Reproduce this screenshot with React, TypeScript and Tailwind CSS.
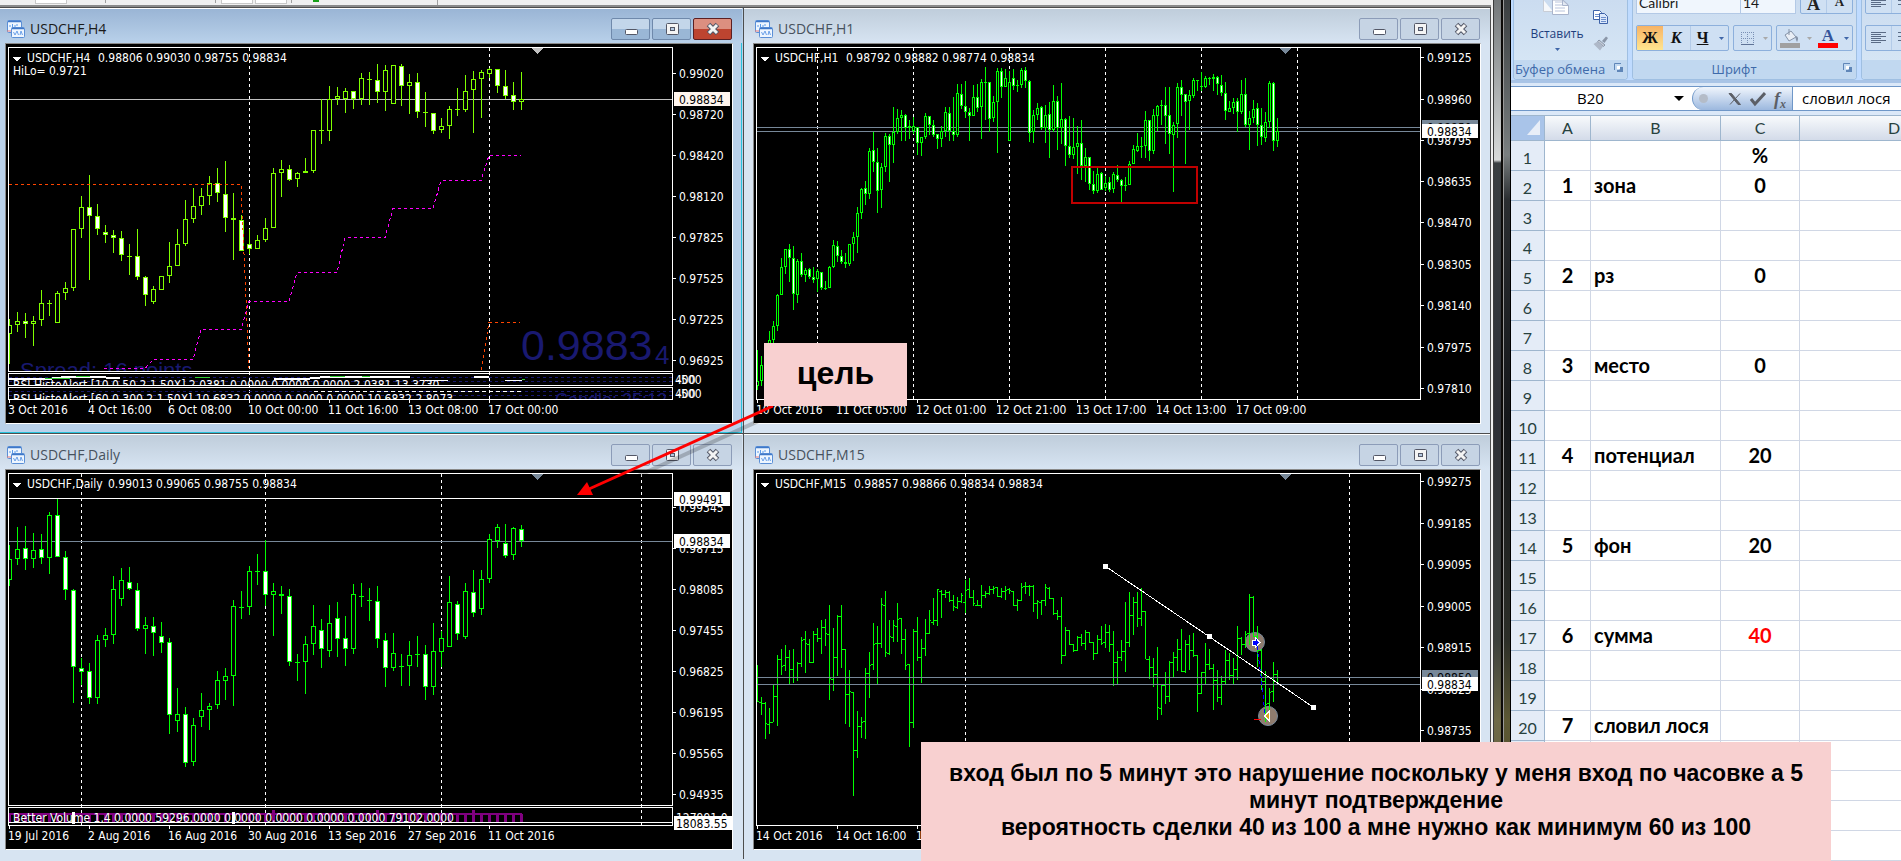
import type { ReactNode } from 'react';

const TICKS_PER_PX = 3;
const FIRST_BAR_X = 9;

const GREEN = '#00ff00';
const SLATE = '#778899';
const CHART_FONT = '"DejaVu Sans Condensed", "DejaVu Sans", sans-serif';
const ARIAL = '"Liberation Sans", Arial, sans-serif';

// high, body top, body bottom, low, filled
const H4_CANDLES = `957 975 1003 1092 0;936 963 976 996 0;941 963 973 1014 1;948 963 973 1038 0;870 909 961 978 0;900 909 914 948 0;873 879 971 971 0;846 864 881 900 0;687 687 866 873 0;588 621 689 714 0;
525 621 650 840 1;612 648 689 705 1;675 696 707 729 1;690 705 716 759 1;693 714 767 783 1;732 768 770 825 0;687 768 833 840 1;828 831 887 918 1;858 867 908 914 0;828 828 872 872 0;
726 798 830 849 0;687 732 800 800 0;600 657 734 740 0;564 618 659 669 0;564 588 620 645 0;528 549 590 615 0;504 549 581 606 1;483 582 656 696 1;579 654 662 780 1;645 660 755 755 1;
688 732 749 764 1;705 720 749 749 0;654 684 722 726 0;504 519 686 686 0;480 507 521 591 0;495 507 542 545 1;516 519 539 561 0;474 513 521 521 0;390 390 515 519 0;298 390 395 432 0;
258 297 395 423 0;261 288 299 315 0;266 273 299 339 0;273 273 299 327 1;219 234 299 315 0;216 237 242 315 0;192 240 278 309 1;195 210 278 333 0;195 195 314 314 0;192 198 260 318 1;
222 246 260 342 0;219 246 338 354 1;276 336 341 381 0;339 339 395 402 1;354 378 392 399 0;318 327 380 417 0;264 327 332 348 0;225 273 332 336 0;213 237 272 399 0;210 216 239 354 0;
204 207 224 236 0;207 207 260 279 1;210 258 290 299 1;246 285 308 330 1;216 297 308 330 0`;

const H1_CANDLES = `1052 1145 1158 1170 0;1068 1095 1145 1158 0;1040 1060 1095 1110 0;993 1020 1060 1070 0;963 978 1020 1030 0;882 885 979 993 0;774 801 887 887 0;747 747 802 822 0;732 747 776 846 1;738 774 884 930 1;
777 783 886 909 0;759 783 827 832 1;804 810 827 846 0;804 807 833 839 1;801 831 842 849 1;807 813 839 876 0;816 816 866 872 1;843 864 866 872 0;798 801 866 866 0;720 735 803 806 0;
723 738 770 786 1;750 768 788 792 1;759 786 794 806 1;732 732 794 800 0;696 711 734 783 0;621 639 713 759 0;564 567 641 657 0;543 564 584 615 1;444 453 584 597 0;396 450 488 516 1;
444 486 575 639 1;489 501 572 624 0;399 408 503 518 0;402 408 437 546 1;321 396 437 489 0;327 354 398 402 0;330 345 356 423 0;342 345 386 423 1;360 378 386 417 0;351 378 395 402 0;
381 381 431 465 1;411 411 431 468 0;339 348 413 417 0;348 348 377 405 1;360 375 407 411 1;402 402 419 447 1;378 393 419 441 0;321 336 395 411 0;321 339 395 423 1;291 393 407 423 1;
252 279 407 411 0;252 282 320 329 1;243 318 338 354 1;324 336 350 423 1;255 291 350 350 0;252 291 326 338 1;237 246 323 417 0;201 246 248 360 0;246 246 359 396 1;288 306 356 368 0;
204 213 308 459 0;204 213 263 294 1;207 234 263 263 0;213 246 425 425 0;207 234 260 270 1;240 255 260 276 1;204 210 257 266 0;201 210 245 266 1;240 243 401 426 1;330 345 398 429 0;
309 324 347 360 0;318 321 386 390 1;315 345 386 429 0;306 342 392 474 1;255 303 392 396 0;288 303 386 450 1;249 357 386 432 0;354 357 440 498 1;348 438 467 474 1;354 441 467 477 0;
378 429 443 522 0;360 429 500 540 1;444 471 500 546 0;471 471 554 570 1;513 552 575 582 1;504 522 575 579 0;516 519 572 572 1;528 549 566 575 0;531 546 572 576 1;516 522 569 579 0;
495 525 542 548 1;537 540 560 606 1;531 555 560 573 1;483 492 557 557 0;435 447 494 494 0;399 438 455 458 0;411 438 440 474 0;333 360 440 474 0;360 360 455 483 1;327 345 455 462 0;
315 318 350 393 0;300 315 320 375 1;261 315 350 432 1;261 345 404 462 1;366 375 407 576 0;249 261 374 414 0;240 261 287 348 1;282 282 308 494 1;270 285 305 390 0;234 240 290 294 0;
240 240 245 273 0;216 258 263 275 0;228 234 263 266 0;231 234 236 255 0;222 231 239 273 0;228 231 254 285 1;225 255 281 288 1;246 279 335 360 1;303 324 338 338 0;294 306 326 342 0;
294 303 338 396 1;240 282 338 342 0;234 282 377 381 1;333 354 377 450 0;300 327 356 369 0;309 324 377 438 1;324 375 413 435 1;336 366 416 426 0;243 249 368 386 0;246 249 425 453 1;
354 393 425 441 0`;

const DAILY_CANDLES = `363 405 470 486 0;309 375 407 423 0;306 372 407 438 1;327 378 407 432 0;330 375 404 420 1;264 273 404 450 0;225 273 401 401 1;381 399 500 528 1;495 498 731 837 1;702 732 746 783 1;
717 741 824 840 1;633 648 824 840 0;612 633 650 669 0;456 495 635 660 0;432 468 527 546 0;429 474 497 498 1;477 498 617 621 1;579 603 617 690 0;579 606 629 696 1;594 636 659 687 1;
642 654 875 930 1;792 870 893 924 0;849 870 1019 1029 1;882 903 1016 1026 0;807 858 881 909 0;837 846 860 918 0;741 768 845 855 0;732 756 773 828 0;528 546 758 846 0;501 549 554 585 0;
426 441 551 573 0;390 441 443 483 0;348 441 515 546 1;477 501 515 636 0;486 510 518 570 0;495 516 716 726 1;690 714 716 771 0;636 660 716 810 0;543 606 662 693 0;585 618 677 732 1;
543 597 683 699 0;534 582 647 699 1;576 642 677 726 1;480 510 677 690 0;477 516 518 549 0;492 528 533 591 0;486 531 647 672 1;627 648 734 789 1;627 687 734 741 0;690 726 728 786 0;
651 693 728 786 0;636 690 695 729 0;663 690 791 828 1;597 681 791 813 0;621 642 686 729 0;456 534 671 671 0;531 540 632 648 1;477 501 641 645 0;438 504 569 579 1;438 465 557 573 0;
330 345 467 477 0;300 309 353 372 0;300 357 398 402 1;309 312 395 408 0;303 315 353 369 1`;

// high, low, open, close
const M15_BARS = `723 836 833 833;819 873 835 838;834 945 838 898;852 930 901 895;780 896 895 817;693 906 817 705;675 753 705 727;663 741 723 699;678 783 699 736;675 777 736 760;
714 771 760 717;639 729 717 648;621 747 645 658;645 717 661 715;621 719 715 630;612 654 630 643;588 690 643 610;585 666 610 628;543 828 630 763;612 801 766 700;
573 756 700 577;543 732 577 676;675 900 676 811;738 909 811 802;804 1116 804 979;861 1002 979 907;879 942 907 894;732 945 892 747;684 822 747 724;597 738 721 660;
606 783 658 658;522 672 658 541;501 699 544 685;588 693 688 637;588 654 640 604;537 654 607 586;582 690 583 646;615 738 646 724;720 969 721 895;615 912 895 622;
579 711 622 700;645 777 700 673;585 696 673 628;558 630 628 590;522 603 595 589;495 606 589 496;498 582 502 511;498 522 511 505;501 534 505 530;513 561 530 546;
519 555 549 532;507 537 532 514;468 567 535 500;462 522 496 520;498 546 520 538;528 546 544 544;483 552 544 514;501 522 514 508;486 513 508 495;486 510 495 492;
489 520 490 518;492 522 518 502;486 528 502 500;492 510 497 500;501 546 502 544;525 561 544 530;477 531 528 490;474 510 487 487;483 516 487 486;483 564 486 538;
528 585 538 532;528 573 535 529;480 546 529 490;489 525 493 522;522 575 523 568;558 588 568 577;519 720 577 694;609 696 694 619;618 663 619 661;660 684 661 679;
636 681 679 640;630 666 640 658;618 678 658 625;624 657 625 656;654 708 656 688;633 690 688 646;606 663 646 658;600 672 655 625;603 684 625 661;621 786 661 715;
681 780 715 700;648 711 700 682;534 744 682 655;504 669 655 574;519 633 574 535;504 609 535 583;492 606 583 562;561 706 562 706;696 765 706 730;702 789 730 751;
669 888 751 851;780 873 853 784;744 840 784 817;711 834 817 715;684 762 715 700;645 741 700 676;615 744 676 742;648 747 742 661;633 738 661 679;627 700 679 694;
693 864 694 808;744 810 808 745;657 780 745 721;675 738 721 733;720 858 733 769;738 834 769 820;756 843 820 771;678 780 771 710;687 768 710 754;702 780 754 736;
606 768 736 643;639 693 643 661;621 672 661 631;510 665 628 520;516 640 520 637;606 729 637 680;675 798 680 772;741 894 772 841;792 864 838 805;714 834 802 751;738 780 751 778`;

function parseRows(source: string, shift = 0): number[][] {
  return source.split(';').map((row) =>
    row
      .trim()
      .split(' ')
      .map((value, index) =>
        index === 4
          ? Number(value)
          : Math.floor((Number(value) - shift) / TICKS_PER_PX)
      )
  );
}

const h4Candles = parseRows(H4_CANDLES);
const h1Candles = parseRows(H1_CANDLES);
const dailyCandles = parseRows(DAILY_CANDLES, 6);
const m15Bars = parseRows(M15_BARS, 6);

type CandlesProps = {
  rows: number[][];
  step: number;
  half: number;
  color: string;
};

function Candles({ rows, step, half, color }: CandlesProps) {
  return (
    <g>
      {rows.map(([high, top, bottom, low, filled], index) => {
        const x = FIRST_BAR_X + index * step;
        const bodyHeight = Math.max(bottom - top, 1);

        return (
          <g key={index}>
            <rect x={x} y={high} width={1} height={Math.max(low - high, 1)} fill={color} />
            <rect x={x - half} y={top} width={half * 2 + 1} height={bodyHeight} fill={color} />
            {bodyHeight > 2 ? (
              <rect
                x={x - half + 1}
                y={top + 1}
                width={half * 2 - 1}
                height={bodyHeight - 2}
                fill={filled ? '#fff' : '#000'}
              />
            ) : null}
          </g>
        );
      })}
    </g>
  );
}

function Bars({ rows }: { rows: number[][] }) {
  return (
    <g fill={GREEN}>
      {rows.map(([high, low, open, close], index) => {
        const x = FIRST_BAR_X + index * 4;

        return (
          <g key={index}>
            <rect x={x} y={high} width={1} height={low - high} />
            <rect x={x - 2} y={open} width={2} height={1} />
            <rect x={x + 1} y={close} width={1} height={1} />
          </g>
        );
      })}
    </g>
  );
}

function PriceTag({
  y,
  label,
  fill = '#fff',
  color = '#000',
}: {
  y: number;
  label: string;
  fill?: string;
  color?: string;
}) {
  return (
    <g>
      <rect x={674} y={y} width={56} height={14} fill={fill} />
      <text x={679} y={y + 12} fill={color}>
        {label}
      </text>
    </g>
  );
}

type ChartProps = {
  id: string;
  symbol: string;
  quote: string;
  quoteX: number;
  bottom?: number;
  prices: [number, string][];
  times: string[];
  separators: number[];
  marker?: string;
  children: ReactNode;
};

function Chart({
  id,
  symbol,
  quote,
  quoteX,
  bottom = 399,
  prices,
  times,
  separators,
  marker = SLATE,
  children,
}: ChartProps) {
  return (
    <svg
      className="block h-auto w-full bg-black"
      viewBox="6 44 726 379"
      fontFamily={CHART_FONT}
      fontSize={12}
      fill="#fff"
      shapeRendering="crispEdges"
      role="img"
      aria-label={symbol}
    >
      <defs>
        <clipPath id={`${id}-plot`}>
          <rect x={9} y={48} width={663} height={bottom - 48} />
        </clipPath>
      </defs>

      {separators.map((x) => (
        <line
          key={x}
          x1={x + 0.5}
          x2={x + 0.5}
          y1={48}
          y2={399}
          stroke="#fff"
          strokeDasharray="3 3"
        />
      ))}

      {prices.map(([y, label]) => (
        <g key={label}>
          <rect x={673} y={y} width={3} height={1} />
          <text x={679} y={y + 5}>
            {label}
          </text>
        </g>
      ))}

      {children}

      <rect x={8.5} y={47.5} width={664} height={bottom - 47} fill="none" stroke="#fff" />
      <path d="M531 48h12l-6 6z" fill={marker} />
      <path d="M12 57h9l-4.500 4.500z" />
      <text x={27} y={62}>
        {symbol}
      </text>
      <text x={quoteX} y={62}>
        {quote}
      </text>

      {times.map((label, index) => (
        <g key={label}>
          <rect x={9 + index * 80} y={400} width={1} height={3} />
          <text x={8 + index * 80} y={414}>
            {label}
          </text>
        </g>
      ))}
    </svg>
  );
}

function H4Chart() {
  return (
    <Chart
      id="h4"
      symbol="USDCHF,H4"
      quote="0.98806 0.99030 0.98755 0.98834"
      quoteX={98}
      bottom={371}
      marker="#c0c0c0"
      separators={[249, 489]}
      prices={[
        [73, '0.99020'],
        [114, '0.98720'],
        [155, '0.98420'],
        [196, '0.98120'],
        [237, '0.97825'],
        [278, '0.97525'],
        [319, '0.97225'],
        [360, '0.96925'],
      ]}
      times={[
        '3 Oct 2016',
        '4 Oct 16:00',
        '6 Oct 08:00',
        '10 Oct 00:00',
        '11 Oct 16:00',
        '13 Oct 08:00',
        '17 Oct 00:00',
      ]}
    >
      <defs>
        <clipPath id="h4-rsi-fast">
          <rect x={9} y={374} width={663} height={11} />
        </clipPath>
        <clipPath id="h4-rsi-slow">
          <rect x={9} y={388} width={663} height={11} />
        </clipPath>
      </defs>

      <text x={13} y={75}>
        HiLo= 0.9721
      </text>
      <rect x={9} y={99} width={663} height={1} fill="#c0c0c0" />
      <g clipPath="url(#h4-plot)">
        <g fill="#191970" fontFamily={ARIAL}>
          <text x={20} y={378} fontSize={22}>
            Spread: 16 points
          </text>
          <text x={521} y={360} fontSize={43}>
            0.9883
          </text>
          <text x={655} y={364} fontSize={26}>
            4
          </text>
        </g>
        <Candles rows={h4Candles} step={8} half={2} color="#7fff00" />
        <g fill="none" strokeDasharray="3 3">
          <path d="M9 184.500H241L249 368M481 370L489 322.500H520" stroke="#ff4500" />
          <path
            d="M104 368.500H145L153 359.500H193L201 329.500H241L249 301.500H289L297 272.500H337L345 237.500H385L393 208.500H433L441 180.500H481L489 155.500H521"
            stroke="#ff00ff"
          />
        </g>
      </g>

      <g clipPath="url(#h4-rsi-fast)">
        <path d="M9 377.500H672M9 381.500H672" stroke="#191970" strokeDasharray="3 3" />
        <path
          d="M9 378.500H52L70 376.500H92L120 378.500M274 378.500H310L330 376.500H394L410 376.500M474 376.500H489"
          stroke="#fff"
          fill="none"
          strokeWidth={2}
        />
        <path
          d="M45 378.500H70M76 376.500H90M195 377.500H210M330 376.500H345M362 376.500H370M522 379.500H525"
          stroke="#32cd32"
        />
        <path d="M425 380.500H448M505 380.500H522" stroke="#fff" />
        <text x={13} y={389}>
          RSI HistoAlert [10,0,50,2,1,50X] 2.0381 0.0000 0.0000 0.0000 2.0381 13.3730
        </text>
      </g>
      <g clipPath="url(#h4-rsi-slow)">
        <path d="M9 391.500H672M9 395.500H672" stroke="#191970" strokeDasharray="3 3" />
        <path d="M314 391.500H522" stroke="#fff" strokeDasharray="4 3" />
        <text x={555} y={406} fontSize={18} fill="#191970" fontFamily={ARIAL}>
          Candle: 25:12
        </text>
        <text x={13} y={403}>
          RSI HistoAlert [60,0,300,2,1,50X] 10.6832 0.0000 0.0000 0.0000 10.6832 2.8073
        </text>
      </g>
      <g fill="none" stroke="#fff">
        <rect x={8.5} y={373.5} width={664} height={12} />
        <rect x={8.5} y={387.5} width={664} height={12} />
      </g>
      <g>
        <text x={675} y={384}>400</text>
        <text x={677} y={384}>-500</text>
        <text x={675} y={398}>400</text>
        <text x={677} y={398}>-500</text>
      </g>
      <PriceTag y={92} label="0.98834" fill="#fff5ee" />
    </Chart>
  );
}

function H1Chart() {
  return (
    <Chart
      id="h1"
      symbol="USDCHF,H1"
      quote="0.98792 0.98882 0.98774 0.98834"
      quoteX={98}
      separators={[69, 165, 261, 357, 453, 549]}
      prices={[
        [57, '0.99125'],
        [99, '0.98960'],
        [140, '0.98795'],
        [181, '0.98635'],
        [222, '0.98470'],
        [264, '0.98305'],
        [305, '0.98140'],
        [347, '0.97975'],
        [388, '0.97810'],
      ]}
      times={[
        '10 Oct 2016',
        '11 Oct 05:00',
        '12 Oct 01:00',
        '12 Oct 21:00',
        '13 Oct 17:00',
        '14 Oct 13:00',
        '17 Oct 09:00',
      ]}
    >
      <rect x={9} y={127} width={663} height={1} fill={SLATE} />
      <rect x={9} y={131} width={663} height={1} fill={SLATE} />
      <g clipPath="url(#h1-plot)">
        <Candles rows={h1Candles} step={4} half={1} color={GREEN} />
      </g>
      <rect x={324} y={167} width={125} height={36} fill="none" stroke="#c00000" strokeWidth={2} />
      <PriceTag y={120} label="0.98850" fill={SLATE} />
      <PriceTag y={124} label="0.98834" />
    </Chart>
  );
}

function DailyChart() {
  return (
    <Chart
      id="daily"
      symbol="USDCHF,Daily"
      quote="0.99013 0.99065 0.98755 0.98834"
      quoteX={108}
      bottom={379}
      separators={[81, 265, 441, 641]}
      prices={[
        [81, '0.99345'],
        [122, '0.98715'],
        [163, '0.98085'],
        [204, '0.97455'],
        [245, '0.96825'],
        [286, '0.96195'],
        [327, '0.95565'],
        [368, '0.94935'],
      ]}
      times={[
        '19 Jul 2016',
        '2 Aug 2016',
        '16 Aug 2016',
        '30 Aug 2016',
        '13 Sep 2016',
        '27 Sep 2016',
        '11 Oct 2016',
      ]}
    >
      <rect x={9} y={72} width={663} height={1} />
      <rect x={9} y={115} width={663} height={1} fill={SLATE} />
      <g clipPath="url(#daily-plot)">
        <Candles rows={dailyCandles} step={8} half={2} color={GREEN} />
      </g>
      <g fill="#800080">
        <rect x={9} y={387} width={513} height={2} />
        {dailyCandles.map((_, index) => {
          const tall = index === 33 || index === 46 || index === 58;

          return (
            <rect
              key={index}
              x={8 + index * 8}
              y={tall ? 384 : 388}
              width={3}
              height={tall ? 13 : 9}
            />
          );
        })}
      </g>
      <rect x={72} y={386} width={3} height={12} />
      <rect x={232} y={386} width={3} height={12} />
      <rect x={9} y={396} width={663} height={1} />
      <text x={13} y={396}>
        Better Volume 1.4 0.0000 59296.0000 0.0000 0.0000 0.0000 0.0000 79102.0000
      </text>
      <rect x={8.5} y={381.5} width={664} height={18} fill="none" stroke="#fff" />
      <text x={676} y={396}>
        127991.0
      </text>
      <PriceTag y={66} label="0.99491" />
      <PriceTag y={108} label="0.98834" />
      <rect x={674} y={390} width={58} height={14} />
      <text x={676} y={402} fill="#000">
        18083.55
      </text>
    </Chart>
  );
}

function M15Chart() {
  return (
    <Chart
      id="m15"
      symbol="USDCHF,M15"
      quote="0.98857 0.98866 0.98834 0.98834"
      quoteX={106}
      separators={[217, 601]}
      prices={[
        [55, '0.99275'],
        [97, '0.99185'],
        [138, '0.99095'],
        [180, '0.99005'],
        [221, '0.98915'],
        [263, '0.98825'],
        [304, '0.98735'],
      ]}
      times={['14 Oct 2016', '14 Oct 16:00', '17 Oct 01:00']}
    >
      <g clipPath="url(#m15-plot)">
        <g shapeRendering="auto" fill="#8f7c6e" stroke={SLATE}>
          <circle cx={507} cy={216} r={9.5} />
          <circle cx={520} cy={290} r={9.5} />
        </g>
        <Bars rows={m15Bars} />
      </g>
      <rect x={9} y={251} width={663} height={1} fill={SLATE} />
      <rect x={9} y={258} width={663} height={1} fill={SLATE} />
      <path d="M357 140L565 281" stroke="#fff" />
      <rect x={355} y={138} width={5} height={5} />
      <rect x={459} y={208} width={5} height={5} />
      <rect x={563} y={279} width={5} height={5} />
      <path d="M509 220L513 250L517 288" stroke="#0000ff" strokeDasharray="4 3" fill="none" />
      <path d="M504 214h3v-3l5 5.500l-5 5.500v-3h-3z" fill="#0000ff" stroke="#fff" />
      <path d="M521.500 285v10l-5-5z" fill="#daa520" stroke="#fff" />
      <rect x={506} y={293} width={7} height={1} fill="#ff0000" />
      <PriceTag y={244} label="0.98850" fill={SLATE} />
      <PriceTag y={251} label="0.98834" />
    </Chart>
  );
}

function ChartIcon() {
  return (
    <svg className="size-[18px] shrink-0" viewBox="0 0 18 18" aria-hidden="true">
      <rect x="0.500" y="0.500" width="14" height="12" rx="1" fill="#eef6ff" stroke="#5b8fd6" />
      <path d="M1 1.500h13" stroke="#3f78c8" strokeWidth="1.500" />
      <path d="M3 7V5M5.500 8V4M8 7V5M10 6V4" stroke="#5a9ae8" />
      <path d="M0 11h4" stroke="#e07878" />
      <rect x="4.500" y="7.500" width="13" height="10" rx="1" fill="#eef6ff" stroke="#5b8fd6" />
      <path d="M5 8.500h12" stroke="#3f78c8" strokeWidth="1.500" />
      <path d="M6.500 12l1.500 3 2-4 1.500 4M13 15l1-4 1.500 4" stroke="#6aa0e8" fill="none" />
    </svg>
  );
}

function MinimizeGlyph() {
  return (
    <svg className="size-4" viewBox="0 0 16 16" aria-hidden="true">
      <rect x="2.500" y="8.500" width="12" height="5" rx="1" fill="#fff" stroke="#535766" />
    </svg>
  );
}

function RestoreGlyph() {
  return (
    <svg className="size-4" viewBox="0 0 16 16" aria-hidden="true">
      <rect x="2.500" y="2.500" width="12" height="11" rx="1" fill="#f4f4f4" stroke="#535766" />
      <rect x="6.500" y="6.500" width="4" height="3" fill="#b4c8e0" stroke="#535766" />
    </svg>
  );
}

function CloseGlyph() {
  return (
    <svg className="size-4" viewBox="0 0 16 16" aria-hidden="true">
      <path d="M3.500 3.500l9 9M12.500 3.500l-9 9" stroke="#535766" strokeWidth="5" />
      <path d="M4 4l8 8M12 4l-8 8" stroke="#f4f4f4" strokeWidth="3" />
    </svg>
  );
}

type ChartWindowProps = {
  title: string;
  active?: boolean;
  edge?: boolean;
  children: ReactNode;
};

function ChartWindow({ title, active, edge, children }: ChartWindowProps) {
  const button = active
    ? 'border-[#6f89ab] bg-linear-to-b from-[#c3d6ea] from-50% to-[#9ab7d6] to-50%'
    : 'border-[#8c9cb8] bg-[#c6d4e4]';

  return (
    <section
      className={`flex flex-col border-t border-t-[#4d4d4d] ${
        active ? 'bg-[#b9d1ea]' : 'bg-[#d7e4f2]'
      } ${edge ? 'pr-px' : 'border-x border-x-[#4d4d4d]'}`}
    >
      <header
        className={`flex h-[35px] items-end justify-between border-t border-white bg-linear-to-b pr-2.5 pb-[3px] ${
          active ? 'from-[#9ab5d5] to-[#b9d1ea]' : 'from-[#bfcddb] to-[#d7e4f2]'
        } ${edge ? 'pl-[7px]' : 'pl-[11px]'}`}
      >
        <div className="flex items-center gap-[5px]">
          <ChartIcon />
          <h2
            className={`font-['Open_Sans',sans-serif] text-[14px] leading-[22px] ${
              active ? 'text-[#1a1a1a]' : 'text-[#47525e]'
            }`}
          >
            {title}
          </h2>
        </div>
        <div className="flex gap-0.5">
          <button
            type="button"
            aria-label="Свернуть"
            className={`flex h-[22px] w-[39px] items-center justify-center rounded-xs border ${button}`}
          >
            <MinimizeGlyph />
          </button>
          <button
            type="button"
            aria-label="Развернуть"
            className={`flex h-[22px] w-[39px] items-center justify-center rounded-xs border ${button}`}
          >
            <RestoreGlyph />
          </button>
          <button
            type="button"
            aria-label="Закрыть"
            className={`flex h-[22px] w-[39px] items-center justify-center rounded-xs border ${
              active
                ? 'border-[#5c1f22] bg-linear-to-b from-[#dc8f80] from-50% to-[#bd4430] to-50%'
                : button
            }`}
          >
            <CloseGlyph />
          </button>
        </div>
      </header>
      <div
        className={`flex-1 border-r border-b pr-[8px] pb-[8px] ${
          active ? 'border-[#27c2dd]' : 'border-[#d7e4f2]'
        } ${edge ? 'pl-[5px]' : 'pl-[9px]'}`}
      >
        <div className="border border-t-[#8a8a8a] border-r-white border-b-white border-l-[#8a8a8a]">
          {children}
        </div>
      </div>
    </section>
  );
}

function LauncherGlyph() {
  return (
    <svg className="size-[9px]" viewBox="0 0 9 9" aria-hidden="true">
      <path d="M0.500 7V0.500H7" fill="none" stroke="#5f86b8" />
      <path d="M4 4h5v5H3V7h3z" fill="#5f86b8" />
      <rect x="3" y="3" width="3" height="3" fill="#fff" />
    </svg>
  );
}

function Caret({ muted }: { muted?: boolean }) {
  return (
    <svg className="h-[3px] w-[5px]" viewBox="0 0 5 3" aria-hidden="true">
      <path d="M0 0h5L2.500 3z" fill={muted ? '#a9a9a9' : '#3f66a8'} />
    </svg>
  );
}

function RibbonGroup({
  label,
  className,
  children,
}: {
  label: string;
  className: string;
  children: ReactNode;
}) {
  return (
    <div
      className={`flex shrink-0 flex-col overflow-hidden rounded-b border border-t-0 border-[#9fbfe2] bg-linear-to-b from-[#cbdcf0] to-[#d8e8f6] ${className}`}
    >
      <div className="h-[61px]">{children}</div>
      <div className="flex h-[19px] items-center bg-[#c1d8f0] pr-1 text-[13px] text-[#3e6aaa]">
        <span className="flex-1 pr-2 text-center whitespace-nowrap">{label}</span>
        <button type="button" aria-label={`${label}: параметры`} className="pb-1">
          <LauncherGlyph />
        </button>
      </div>
    </div>
  );
}

function AlignGlyph({ centered }: { centered?: boolean }) {
  return (
    <svg className="h-3 w-[15px]" viewBox="0 0 15 12" aria-hidden="true">
      <path
        d={
          centered
            ? 'M0 0.500H15M3 2.500H12M0 4.500H15M3 6.500H12M0 8.500H15M3 10.500H12'
            : 'M0 0.500H15M0 2.500H10M0 4.500H15M0 6.500H10M0 8.500H15M0 10.500H10'
        }
        stroke="#5a6b85"
      />
    </svg>
  );
}

function Ribbon() {
  const frame = 'flex overflow-hidden rounded-xs border border-[#8db0dc] bg-[#cfe0f3]';

  return (
    <div className="flex gap-1 overflow-hidden border-b-[3px] border-[#a9c4e6] bg-[#bfdbff] pl-0.5 font-['Open_Sans',sans-serif]">
      <RibbonGroup label="Буфер обмена" className="w-[115px]">
        <div className="flex justify-between pr-[19px] pl-4">
          <button
            type="button"
            className="flex w-[54px] flex-col items-center text-[12px] leading-5 text-[#1e3f7d]"
          >
            <svg className="h-[24px] w-7" viewBox="0 0 28 24" aria-hidden="true">
              <path d="M0.500 0V11.500H10" fill="#f6f8fb" stroke="#c8cdd6" />
              <path d="M9.500 0V14.500H25.500V5L20 0z" fill="#fff" stroke="#a9b4cc" />
              <path d="M12 2h7M12 5h7M12 8h10M12 11h10" stroke="#b9c4dc" />
              <path d="M19.500 0v5.500h6z" fill="#e3e9f3" stroke="#a9b4cc" />
            </svg>
            <span>Вставить</span>
            <span className="pt-1">
              <Caret />
            </span>
          </button>
          <div className="flex flex-col gap-3 pt-2.5">
            <button type="button" aria-label="Копировать">
              <svg className="h-[14px] w-[15px]" viewBox="0 0 15 14" aria-hidden="true">
                <path d="M0.500 0.500h6l2 2v7h-8z" fill="#fff" stroke="#3d62a8" />
                <path d="M2 4.500h4M2 6.500h4" stroke="#6d8ecb" />
                <path d="M6.500 3.500h5l3 3v7h-8z" fill="#dbe8fb" stroke="#3d62a8" />
                <path d="M8 7.500h5M8 9.500h5M8 11.500h5" stroke="#6d8ecb" />
              </svg>
            </button>
            <button type="button" aria-label="Формат по образцу">
              <svg className="size-[15px]" viewBox="0 0 15 15" aria-hidden="true">
                <path d="M9 5l4-4.500 2 1.500-3.500 5z" fill="#8a96a8" />
                <path d="M6 4l6 5-1.500 1.500-6-5z" fill="#c3cad6" stroke="#8a96a8" />
                <path d="M4.500 5.500L10 10.500 7 14.500 0.500 8z" fill="#aeb8c8" />
              </svg>
            </button>
          </div>
        </div>
      </RibbonGroup>

      <RibbonGroup label="Шрифт" className="w-[225px]">
        <div className="flex flex-col gap-[11px] px-[3px]">
          <div className="flex h-[14px] items-end gap-1">
            <div className="flex text-[14px] text-[#1a1a1a]">
              <label className="flex">
                <span className="sr-only">Шрифт</span>
                <select className="h-6 w-[105px] appearance-none border border-[#b3c9e6] bg-[#f0f6fd] px-0.5 font-['Lato',sans-serif]">
                  <option>Calibri</option>
                </select>
              </label>
              <label className="flex">
                <span className="sr-only">Размер шрифта</span>
                <select className="h-6 w-[55px] appearance-none border border-l-0 border-[#b3c9e6] bg-[#f0f6fd] px-0.5 font-['Lato',sans-serif]">
                  <option>14</option>
                </select>
              </label>
            </div>
            <div className={`h-6 w-[53px] font-['Liberation_Serif',serif] font-bold text-[#222] ${frame}`}>
              <button type="button" className="flex-1 border-r border-[#b3cbe8] text-[18px]">
                A
              </button>
              <button type="button" className="flex-1 text-[13px]">
                A
              </button>
            </div>
          </div>

          <div className="flex gap-1">
            <div className={`h-[26px] w-[93px] font-['Liberation_Serif',serif] text-[16px] text-[#111] ${frame}`}>
              <button
                type="button"
                aria-pressed="true"
                className="w-[26px] bg-linear-to-b from-[#f7b365] to-[#ffe58f] font-bold"
              >
                Ж
              </button>
              <button type="button" className="w-7 border-r border-[#b3cbe8] font-bold italic">
                К
              </button>
              <button type="button" className="w-6 font-bold underline">
                Ч
              </button>
              <button type="button" aria-label="Вид подчеркивания" className="px-1">
                <Caret />
              </button>
            </div>
            <div className={`h-[26px] w-[40px] items-center justify-between pr-[3px] pl-[7px] ${frame}`}>
              <button type="button" aria-label="Границы">
                <svg className="size-[13px]" viewBox="0 0 13 13" aria-hidden="true">
                  <path
                    d="M0.500 0V12M6.500 0V12M12.500 0V12M0 0.500H13M0 6.500H13"
                    stroke="#7a90b4"
                    strokeDasharray="1 1"
                  />
                  <path d="M0 12.500H13" stroke="#5f7396" />
                </svg>
              </button>
              <Caret muted />
            </div>
            <div className={`h-[26px] w-[77px] items-center justify-between px-[3px] ${frame}`}>
              <button type="button" aria-label="Цвет заливки">
                <svg className="h-[19px] w-5" viewBox="0 0 20 19" aria-hidden="true">
                  <path d="M5 6l6-4 5 6-7 4z" fill="#e9eef5" stroke="#8593a8" />
                  <path d="M9 0v6" stroke="#8593a8" />
                  <path d="M16 7c3 1 2 4 1 6-1-2-2-4-1-6z" fill="#8593a8" />
                  <rect y="14" width="20" height="5" fill="#a0a0a0" />
                </svg>
              </button>
              <Caret muted />
              <button
                type="button"
                aria-label="Цвет текста"
                className="flex w-5 flex-col items-center font-['Liberation_Serif',serif] text-[17px] leading-[15px] font-bold text-[#35549b]"
              >
                A
                <span className="h-[5px] w-5 bg-[#ff0000]" />
              </button>
              <Caret />
            </div>
          </div>
        </div>
      </RibbonGroup>

      <RibbonGroup label="Выравнивание" className="w-[220px]">
        <div className="flex flex-col gap-[11px] px-[3px]">
          <div className="flex h-[14px] items-end">
            <div className={`h-6 w-[100px] ${frame}`}>
              <button
                type="button"
                aria-label="По верхнему краю"
                className="flex w-[26px] items-center justify-center border-r border-[#b3cbe8]"
              >
                <AlignGlyph />
              </button>
              <button
                type="button"
                aria-label="По середине"
                className="flex w-[26px] items-center justify-center"
              >
                <AlignGlyph centered />
              </button>
            </div>
          </div>
          <div className={`h-[26px] w-[100px] ${frame}`}>
            <button
              type="button"
              aria-label="По левому краю"
              className="flex w-[26px] items-center justify-center border-r border-[#b3cbe8]"
            >
              <AlignGlyph />
            </button>
            <button
              type="button"
              aria-label="По центру"
              className="flex w-[26px] items-center justify-center"
            >
              <AlignGlyph centered />
            </button>
          </div>
        </div>
      </RibbonGroup>
    </div>
  );
}

function FormulaBar() {
  return (
    <div className="flex h-[25px] border-y border-[#6f97c8] bg-white font-['Open_Sans',sans-serif] text-[15px] text-black">
      <div className="flex w-[181px] shrink-0 items-center pr-2">
        <input
          aria-label="Имя"
          defaultValue="B20"
          className="w-full min-w-0 bg-transparent pr-1 text-center"
        />
        <svg className="h-[5px] w-[10px] shrink-0" viewBox="0 0 10 5" aria-hidden="true">
          <path d="M0 0h10L5 5z" />
        </svg>
      </div>
      <div className="flex w-[101px] shrink-0 items-center justify-between rounded-l-full border-r border-l border-[#6f97c8] bg-linear-to-b from-[#f0f5fc] to-[#9cb8de] pr-1.5 pl-1.5">
        <span className="size-[9px] rounded-full bg-[#b4bcc8]" />
        <span className="flex items-center gap-2">
          <button type="button" aria-label="Отмена">
            <svg className="size-[14px]" viewBox="0 0 14 14" aria-hidden="true">
              <path d="M1 1.500h2.500l9 11H10zM12 1.500L2 12.500" stroke="#5c5f66" fill="#5c5f66" />
            </svg>
          </button>
          <button type="button" aria-label="Ввод">
            <svg className="size-[16px]" viewBox="0 0 16 16" aria-hidden="true">
              <path d="M1 8l4 5L15 2" stroke="#5c5f66" strokeWidth="3" fill="none" />
            </svg>
          </button>
          <button
            type="button"
            className="font-['Liberation_Serif',serif] text-[18px] leading-5 font-bold text-[#5c5f66] italic"
          >
            f<sub className="text-[12px]">x</sub>
          </button>
        </span>
      </div>
      <input
        aria-label="Строка формул"
        defaultValue="словил лося"
        className="min-w-0 flex-1 bg-white pl-[9px]"
      />
    </div>
  );
}

type SheetRow = { a?: string; b?: string; c?: string; alert?: boolean };

const SHEET: Record<number, SheetRow> = {
  1: { c: '%' },
  2: { a: '1', b: 'зона', c: '0' },
  5: { a: '2', b: 'рз', c: '0' },
  8: { a: '3', b: 'место', c: '0' },
  11: { a: '4', b: 'потенциал', c: '20' },
  14: { a: '5', b: 'фон', c: '20' },
  17: { a: '6', b: 'сумма', c: '40', alert: true },
  20: { a: '7', b: 'словил лося' },
};

function Sheet() {
  const rows = Array.from({ length: 24 }, (_, index) => index + 1);
  const head =
    'h-6 border-r border-b border-[#9eb6ce] bg-linear-to-b from-[#f8fafc] to-[#d3dbe9] text-[16px] font-normal';
  const cell = 'h-[30px] border-r border-b border-[#d0d7e5] pb-0.5';

  return (
    <table className="w-[478px] table-fixed border-separate border-spacing-0 border-t border-[#9eb6ce] bg-white font-['Lato','Open_Sans',sans-serif] text-[20px] leading-6 text-black">
      <colgroup>
        <col className="w-[34px]" />
        <col className="w-[46px]" />
        <col className="w-[130px]" />
        <col className="w-[79px]" />
        <col className="w-[189px]" />
      </colgroup>
      <thead className="text-[#27413e]">
        <tr>
          <td className="h-6 border-r border-b border-[#9eb6ce] bg-[#a9c4e9]">
            <svg className="ml-auto size-[17px]" viewBox="0 0 17 17" aria-hidden="true">
              <path d="M13 0v15H0z" fill="#e8eef8" />
            </svg>
          </td>
          <th className={head}>A</th>
          <th className={head}>B</th>
          <th className={head}>C</th>
          <th className={head}>D</th>
        </tr>
      </thead>
      <tbody>
        {rows.map((row) => (
          <tr key={row}>
            <th className="h-[30px] border-r border-b border-[#9eb6ce] bg-[#e4ecf7] pt-1 text-[16px] font-normal text-[#27413e]">
              {row}
            </th>
            <td className={`text-center font-bold ${cell}`}>{SHEET[row]?.a}</td>
            <td className={`pl-[3px] font-bold whitespace-nowrap ${cell}`}>
              {SHEET[row]?.b}
            </td>
            <td
              className={`text-center font-bold ${cell} ${
                SHEET[row]?.alert ? 'text-[#ff0000]' : ''
              }`}
            >
              {SHEET[row]?.c}
            </td>
            <td className={cell} />
          </tr>
        ))}
      </tbody>
    </table>
  );
}

// Strip of desktop visible between the two application frames.
function DesktopGap() {
  return (
    <div className="flex w-5 shrink-0 bg-[#f0f0f0] pl-0.5">
      <div className="w-px bg-[#3c3c3c]" />
      <div className="w-[7px] bg-[linear-gradient(#74787a,#d8dada_160px,#3a3f42_163px,#2e3036_420px,#3c403c_640px,#6f6a48_720px,#5c5838)]" />
      <div className="w-0.5 bg-[#0c0a08]" />
      <div className="w-px bg-[#9a9a9a]" />
      <div className="flex-1 border-r border-black bg-[linear-gradient(#3a3e40,#7a7f80_155px,#2a2d30_200px,#15171a_420px,#2c2e28_640px,#5c5834_720px,#4a4628)]" />
    </div>
  );
}

export default function App() {
  return (
    <main className="relative flex h-screen min-h-0 overflow-hidden bg-[#d7e4f2]">
      <div className="flex min-w-0 flex-1 flex-col">
        <div className="flex h-[7px] shrink-0 items-start border-b-2 border-[#8a8a8a] bg-[#f0f0f0] pl-[35px]">
          <span className="h-1 w-8 border-x border-b border-[#c8c8c8] bg-white" />
          <span className="ml-[38px] h-[3px] w-px bg-[#a0a0a0]" />
          <span className="ml-[109px] h-[3px] w-px bg-[#a0a0a0]" />
          <span className="ml-[5px] h-1 w-8 border-x border-b border-[#c8c8c8] bg-white" />
          <span className="ml-0.5 h-1 w-8 border-x border-b border-[#c8c8c8] bg-white" />
          <span className="ml-1 h-[3px] w-px bg-[#a0a0a0]" />
          <span className="ml-[21px] h-0.5 w-[6px] bg-[#18a018]" />
          <span className="ml-[118px] h-[5px] w-px bg-[#a0a0a0]" />
        </div>
        <div className="grid grid-cols-[743fr_748fr]">
          <ChartWindow title="USDCHF,H4" active edge>
            <H4Chart />
          </ChartWindow>
          <ChartWindow title="USDCHF,H1">
            <H1Chart />
          </ChartWindow>
          <ChartWindow title="USDCHF,Daily" edge>
            <DailyChart />
          </ChartWindow>
          <ChartWindow title="USDCHF,M15">
            <M15Chart />
          </ChartWindow>
        </div>
      </div>

      <DesktopGap />

      <aside className="flex w-[390px] shrink-0 flex-col overflow-hidden bg-[#dbe8f8]">
        <Ribbon />
        <div className="pt-[3px] pb-1">
          <FormulaBar />
        </div>
        <Sheet />
      </aside>

      <svg
        className="absolute top-[400px] left-[570px] h-[110px] w-[220px]"
        viewBox="570 400 220 110"
        aria-hidden="true"
      >
        <path d="M776 413L596 495" stroke="#000" strokeOpacity="0.200" strokeWidth="4" />
        <path d="M773 406L589 489" stroke="#ff0000" strokeWidth="3" />
        <path d="M577 495L587 482L593 495z" fill="#ff0000" />
      </svg>
      <p className="absolute top-[343px] left-[764px] flex h-[63px] w-[143px] items-center justify-center bg-[#f8d0d0] pb-1 font-['Liberation_Sans',sans-serif] text-[32px] font-bold text-black">
        цель
      </p>
      <p className="absolute top-[742px] left-[921px] flex h-[119px] w-[910px] items-center justify-center bg-[#f8d0d0] pb-0.5 text-center font-['Liberation_Sans',sans-serif] text-[23px] leading-[27px] font-bold text-black">
        вход был по 5 минут это нарушение поскольку у меня вход по часовке а 5
        <br />
        минут подтверждение
        <br />
        вероятность сделки 40 из 100 а мне нужно как минимум 60 из 100
      </p>
    </main>
  );
}
